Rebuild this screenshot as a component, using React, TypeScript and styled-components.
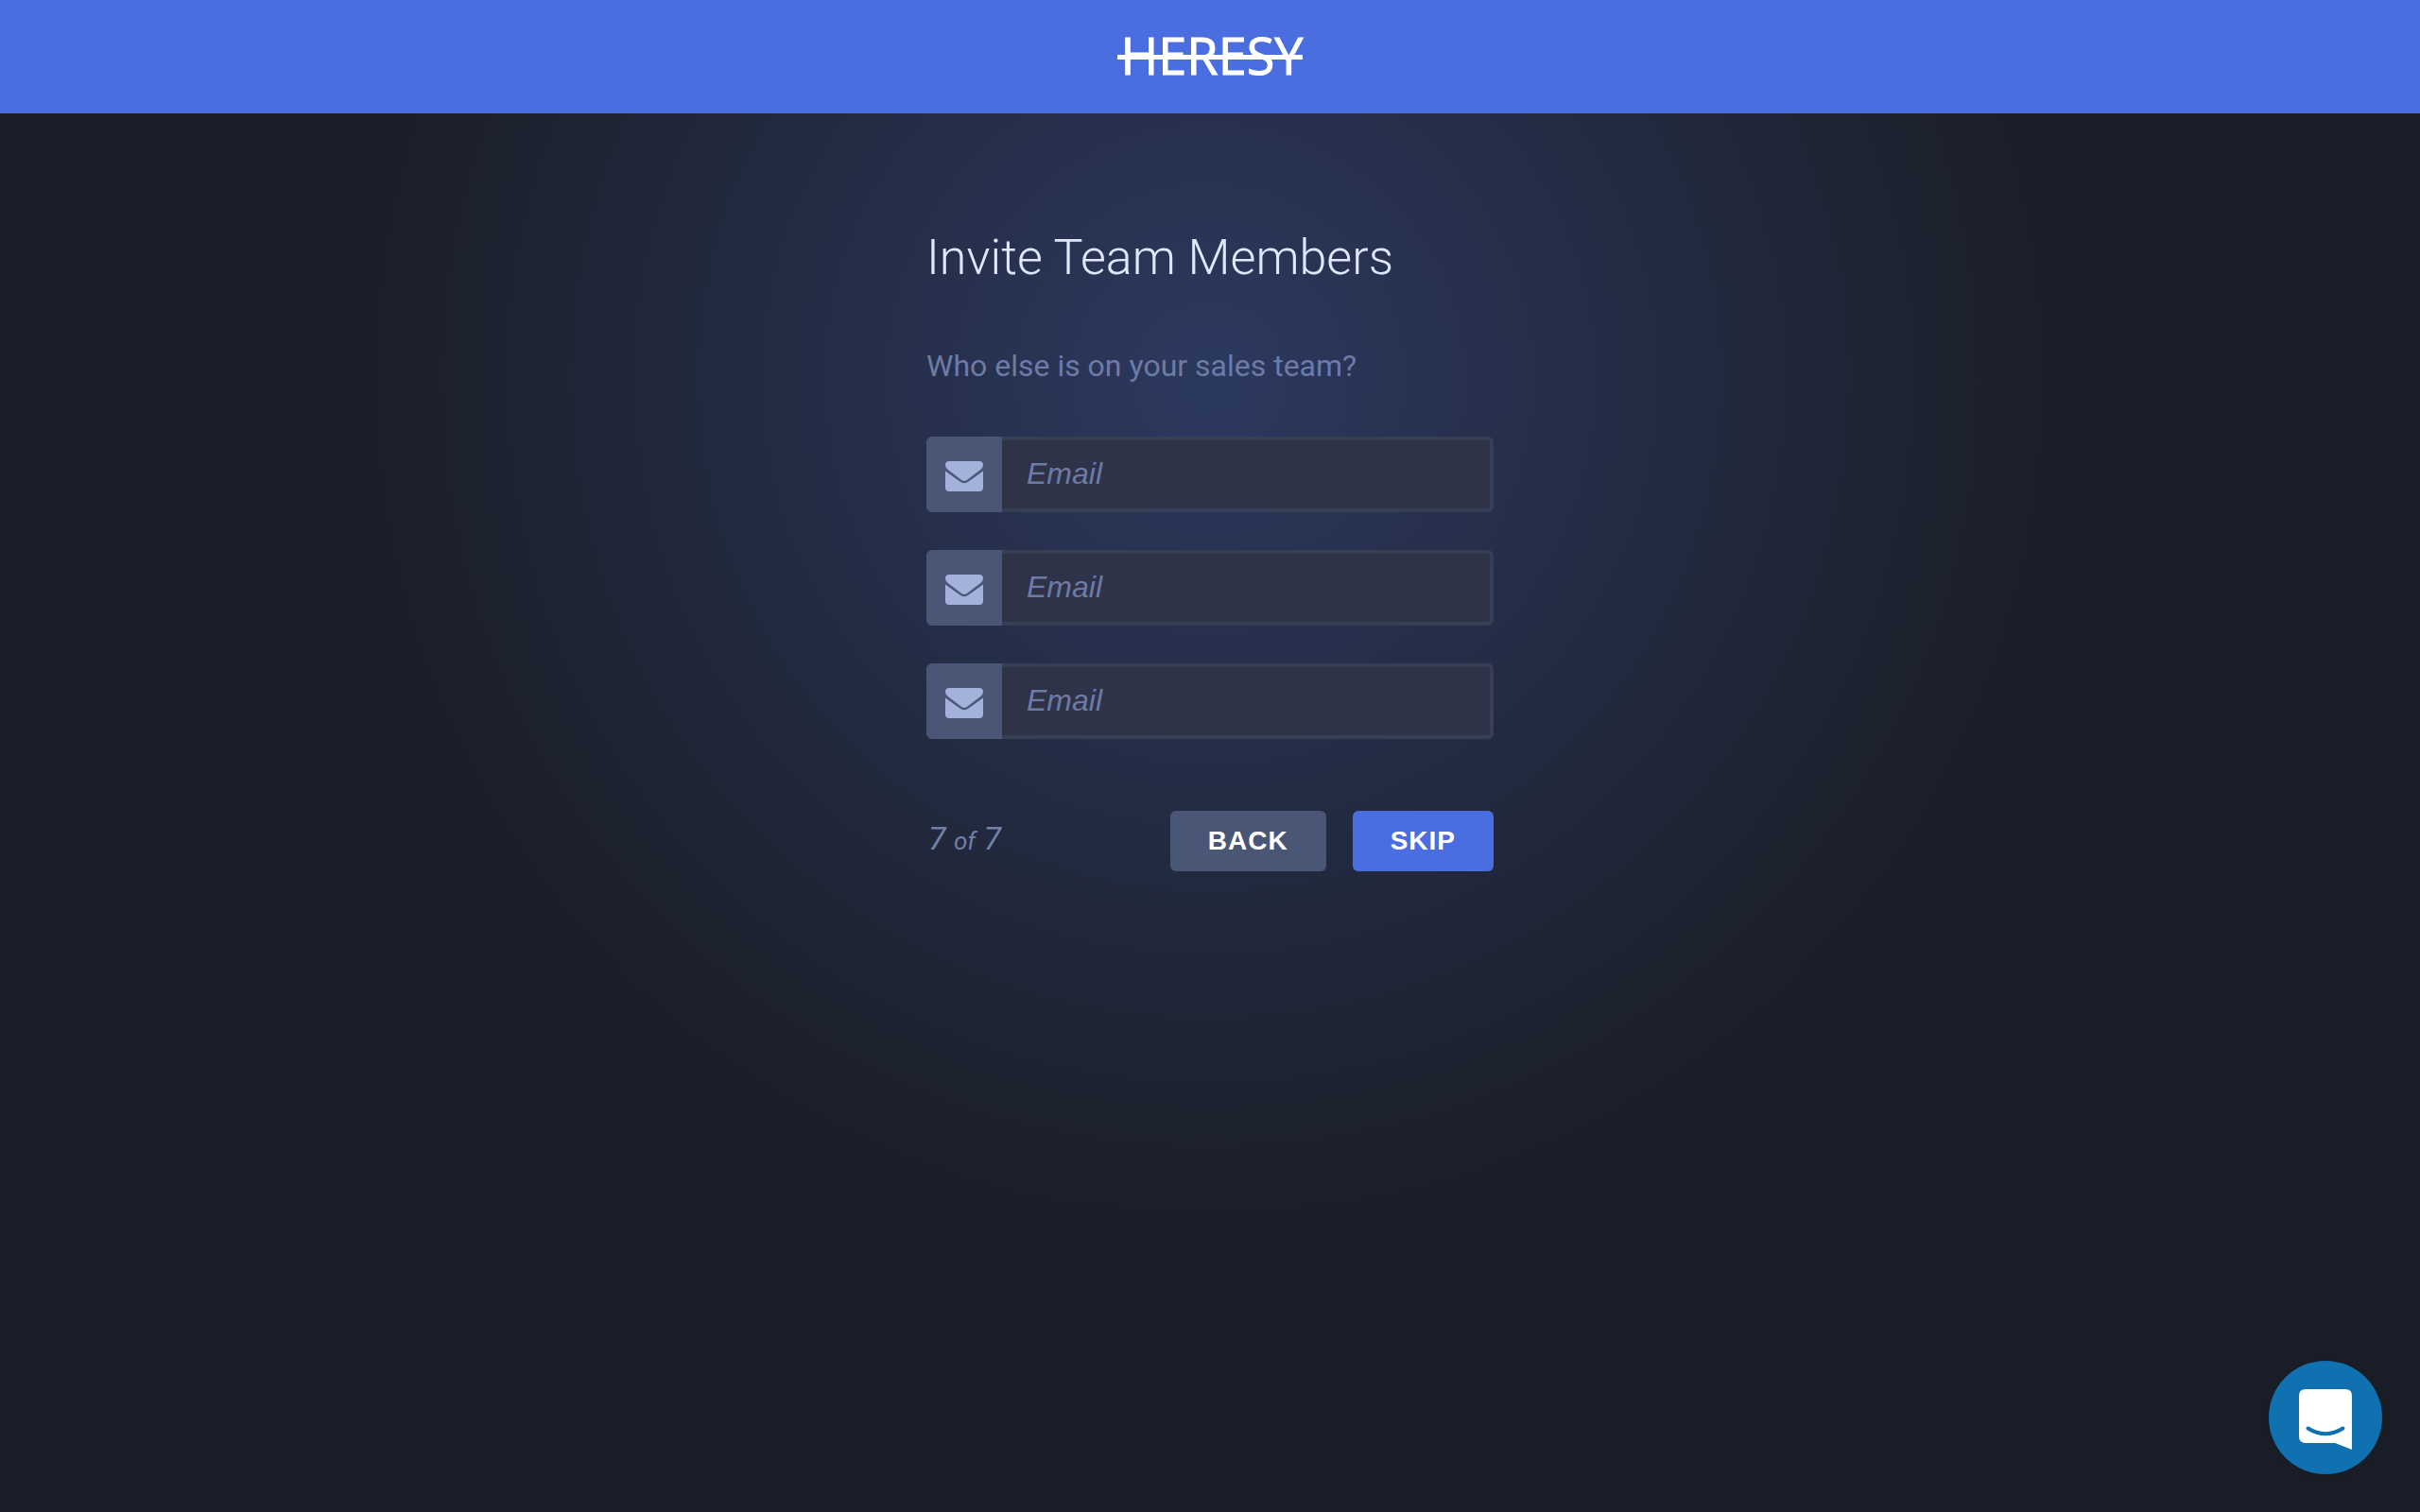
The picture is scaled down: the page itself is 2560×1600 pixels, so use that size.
import React from 'react';
import styled, { createGlobalStyle } from 'styled-components';

const GlobalStyle = createGlobalStyle`
  *, *::before, *::after { box-sizing: border-box; }
  body {
    margin: 0;
    background: #1b1f29;
    font-family: Roboto, sans-serif;
  }
`;

const Page = styled.div`
  min-height: 100vh;
  display: flex;
  flex-direction: column;
  background: radial-gradient(circle 880px at 50% 400px, #2c395f 0%, #1b1f29 100%) #1b1f29;
`;

const TopBar = styled.header`
  height: 120px;
  display: flex;
  align-items: center;
  justify-content: center;
  background: #4a6ee0;
`;

const Logo = styled.a`
  position: relative;
  padding: 0 0 4px 4px;
  color: #fff;
  font-family: "Open Sans", sans-serif;
  font-size: 54px;
  font-weight: 500;
  line-height: 60px;
  text-decoration: none;
  -webkit-text-stroke: 1px #fff;

  &::after {
    content: "";
    position: absolute;
    left: 0;
    right: 0;
    top: 50%;
    height: 5px;
    margin-top: -2px;
    background: #fff;
  }
`;

const Form = styled.form`
  width: 600px;
  max-width: 100%;
  margin: 0 auto;
  padding-top: 120px;
`;

const Title = styled.h1`
  margin: 0 0 61px;
  color: #dfe7ff;
  font-size: 52px;
  font-weight: 300;
  line-height: 66px;
`;

const Question = styled.p`
  margin: 0 0 55px;
  color: #6d7ba6;
  font-size: 32px;
  line-height: 40px;
`;

const Fields = styled.div`
  display: grid;
  gap: 40px;
  margin-bottom: 76px;
`;

const Field = styled.label`
  display: flex;
  height: 80px;
`;

const FieldIcon = styled.span`
  flex: none;
  width: 80px;
  display: flex;
  align-items: center;
  justify-content: center;
  padding-top: 3px;
  border-radius: 6px 0 0 6px;
  background: #4a5676;
  color: #a3b1db;
`;

const EmailInput = styled.input`
  flex: 1;
  min-width: 0;
  padding: 0 26px 2px;
  border: 4px solid #373f56;
  border-left-width: 0;
  border-radius: 0 6px 6px 0;
  outline: none;
  background: #2e3347;
  color: #dfe7ff;
  font-family: "Liberation Sans", sans-serif;
  font-size: 32px;

  &::placeholder {
    color: #6d7ba6;
    font-style: italic;
    opacity: 1;
  }
`;

const Footer = styled.div`
  display: flex;
  align-items: center;
  gap: 28px;
`;

const Progress = styled.span`
  margin-right: auto;
  padding: 0 0 4px 2px;
  color: #7180a8;
  font-size: 34px;
  font-style: italic;
  font-weight: 400;
  line-height: 40px;

  small { font-size: 26px; }
`;

const Button = styled.button<{ $primary?: boolean }>`
  height: 64px;
  padding: 0 40px;
  border: 0;
  border-radius: 6px;
  background: ${p => (p.$primary ? '#4a6ee0' : '#4a5676')};
  color: #fff;
  font-family: "Liberation Sans", sans-serif;
  font-size: 28px;
  font-weight: 700;
  letter-spacing: 1px;
  text-transform: uppercase;
  cursor: pointer;
`;

const ChatLauncher = styled.button`
  position: fixed;
  right: 40px;
  bottom: 40px;
  width: 120px;
  height: 120px;
  padding: 0;
  border: 0;
  border-radius: 50%;
  background: #0f71b0;
  box-shadow: 0 2px 24px rgba(0, 0, 0, 0.2);
  cursor: pointer;

  svg { display: block; }
`;

const Envelope = () => (
  <svg width="40" height="32" viewBox="0 0 40 32" fill="currentColor" aria-hidden="true">
    <path d="M4 0H36Q40 0 40 4Q40 7 36 10L23.5 19.5Q20 22.4 16.5 19.5L4 10Q0 7 0 4Q0 0 4 0Z" />
    <path d="M0 10.6L15.5 21.6Q20 25 24.500 21.6L40 10.6V28Q40 32 36 32H4Q0 32 0 28Z" />
  </svg>
);

const ChatIcon = () => (
  <svg width="120" height="120" viewBox="0 0 120 120" aria-hidden="true">
    <path d="M39 30H81Q88 30 88 37V94L70 87H39Q32 87 32 80V37Q32 30 39 30Z" fill="#fff" />
    <path d="M41.500 71.500Q60 83 78.500 71.500" fill="none" stroke="#0f71b0" strokeWidth="4" strokeLinecap="round" />
  </svg>
);

const FIELDS = ['email-1', 'email-2', 'email-3'];

export default function App() {
  return (
    <Page>
      <GlobalStyle />
      <TopBar>
        <Logo href="#">HERESY</Logo>
      </TopBar>
      <Form onSubmit={e => e.preventDefault()}>
        <Title>Invite Team Members</Title>
        <Question>Who else is on your sales team?</Question>
        <Fields>
          {FIELDS.map(id => (
            <Field key={id} htmlFor={id}>
              <FieldIcon><Envelope /></FieldIcon>
              <EmailInput id={id} name={id} type="email" placeholder="Email" aria-label="Email" />
            </Field>
          ))}
        </Fields>
        <Footer>
          <Progress>7 <small>of</small> 7</Progress>
          <Button type="button">Back</Button>
          <Button type="submit" $primary>Skip</Button>
        </Footer>
      </Form>
      <ChatLauncher type="button" aria-label="Open chat"><ChatIcon /></ChatLauncher>
    </Page>
  );
}
